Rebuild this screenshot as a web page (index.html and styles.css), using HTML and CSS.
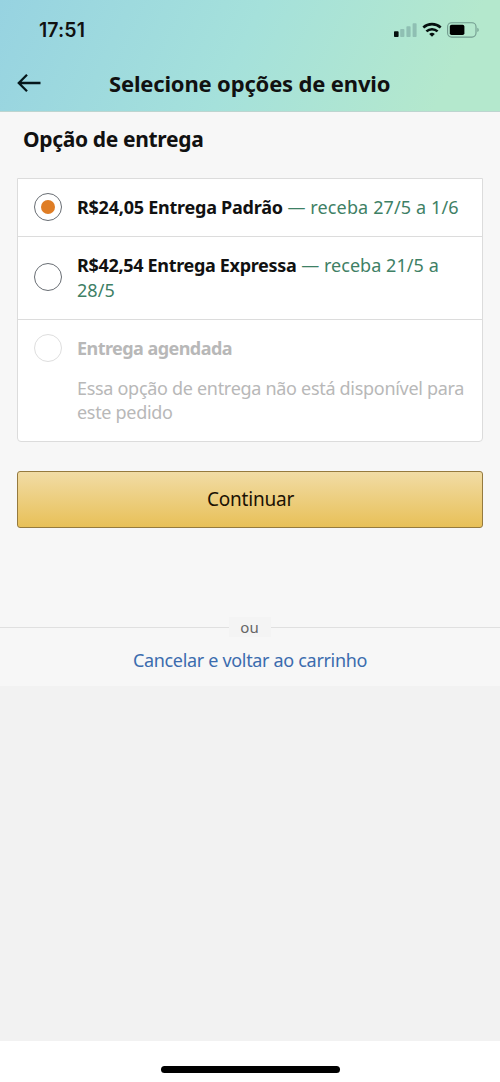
FILE: index.html
```html
<!DOCTYPE html>
<html lang="pt-BR">
<head>
<meta charset="utf-8">
<meta name="viewport" content="width=device-width, initial-scale=1">
<title>Selecione opções de envio</title>
<link rel="stylesheet" href="styles.css">
</head>
<body>
<div class="screen">
  <header class="header">
    <div class="status">
      <span class="time">17:51</span>
      <svg class="status-icons" width="88" height="18" viewBox="0 0 88 18">
        <rect x="2" y="9.3" width="4.6" height="5.7" rx="0.8" fill="#06100f"/>
        <g fill="#8fbfb3">
          <rect x="8.2" y="7.1" width="4.2" height="7.9" rx="0.8"/>
          <rect x="14.4" y="4.2" width="4.2" height="10.8" rx="0.8"/>
          <rect x="20.6" y="1.2" width="4" height="13.8" rx="0.8"/>
        </g>
        <g fill="none" stroke="#06100f" stroke-width="2.6">
          <path d="M31.3 5.4a13.2 13.2 0 0 1 17.4 0"/>
          <path d="M34.4 9.4a8.2 8.2 0 0 1 11.2 0"/>
        </g>
        <path d="M40 14.8l-2.8-2.8a4 4 0 0 1 5.6 0z" fill="#06100f"/>
        <rect x="55.6" y="0.7" width="28.4" height="14.4" rx="4" fill="none" stroke="#729b8f" stroke-width="1.1"/>
        <rect x="57.8" y="2.8" width="14.6" height="10.2" rx="1.8" fill="#000"/>
        <path d="M85.4 5.8c1.7.7 1.7 3.6 0 4.3z" fill="#729b8f"/>
      </svg>
    </div>
    <div class="nav">
      <svg class="back" width="24" height="20" viewBox="0 0 24 20" fill="none" stroke="#06171b" stroke-width="2.3">
        <path d="M23.5 9H2.2M10 .8L1.8 9l8.2 8.2"/>
      </svg>
      <h1 class="title">Selecione opções de envio</h1>
    </div>
  </header>
  <main class="main">
    <h2 class="heading">Opção de entrega</h2>
    <div class="options">
      <label class="option option-standard">
        <span class="radio selected"></span>
        <span class="copy"><b class="name-standard">R$24,05 Entrega Padrão</b> <span class="date date-standard">— receba 27/5 a 1/6</span></span>
      </label>
      <label class="option option-express">
        <span class="radio"></span>
        <span class="copy"><b class="name-express">R$42,54 Entrega Expressa</b> <span class="date">— receba 21/5 a<br>28/5</span></span>
      </label>
      <div class="option option-scheduled">
        <span class="radio"></span>
        <div class="copy">
          <b class="name-scheduled">Entrega agendada</b>
          <p class="note">Essa opção de entrega não está disponível para<br>este pedido</p>
        </div>
      </div>
    </div>
    <button class="continue"><span>Continuar</span></button>
    <div class="divider"><span class="or">ou</span></div>
    <a class="cancel"><span>Cancelar e voltar ao carrinho</span></a>
  </main>
  <div class="filler"></div>
  <footer class="home"><div class="home-bar"></div></footer>
</div>
</body>
</html>
```
FILE: styles.css
```css
* { box-sizing: border-box; }
body { margin: 0; font-family: "Noto Sans", sans-serif; color: #111; }
.screen { width: 500px; height: 1082px; display: flex; flex-direction: column; background: #f2f2f2; overflow: hidden; }
.header { height: 112px; flex: none; background: linear-gradient(115deg, #97d3e1 0%, #a5e1db 48%, #b4e8cd 88%); border-bottom: 1px solid #bdd5d0; }
.status { height: 60px; padding: 0 15px 0 39px; display: flex; align-items: center; justify-content: space-between; }
.time { font: 600 19.5px/24px Inter, sans-serif; letter-spacing: 0.1px; }
.status-icons { margin: 2px 5px 0 0; }
.nav { height: 48px; display: flex; align-items: center; padding-left: 17px; }
.back { flex: none; }
.title { margin: 0 0 2px 68px; font-size: 22px; line-height: 30px; font-weight: 700; letter-spacing: -0.17px; white-space: nowrap; }
.main { height: 574px; flex: none; background: #f7f7f7; }
.heading { margin: 0; padding: 12px 0 0 23px; font-size: 21px; line-height: 30px; height: 66px; letter-spacing: -0.34px; }
.options { margin: 0 17px; height: 264px; background: #fff; border: 1px solid #dcdcdc; border-radius: 0 0 4px 4px; }
.option { display: flex; align-items: center; padding-left: 16px; gap: 15px; font-size: 18px; line-height: 25px; white-space: nowrap; }
.option + .option { border-top: 1px solid #dcdcdc; }
.option-standard { height: 57px; }
.option-express { height: 83px; }
.option-scheduled { height: 122px; align-items: flex-start; padding-top: 14px; color: #b8b8b8; }
.option-standard .radio { margin-bottom: 2px; }
.option-express .radio { margin-bottom: 2px; }
.option-scheduled .copy { padding-top: 2px; }
.radio { width: 28px; height: 28px; flex: none; border: 1px solid #686d73; border-radius: 50%; background: #fff; display: grid; place-items: center; }
.selected::after { content: ""; width: 14px; height: 14px; border-radius: 50%; background: #df7d25; }
.option-scheduled .radio { border-color: #dedede; }
.name-standard { letter-spacing: -0.24px; }
.name-express { letter-spacing: -0.32px; }
.name-scheduled { letter-spacing: -0.55px; }
.date { color: #3e8065; letter-spacing: 0.05px; }
.date-standard { letter-spacing: 0.13px; }
.note { margin: 15px 0 0; line-height: 24px; letter-spacing: -0.3px; }
.continue { display: block; width: 466px; height: 57px; margin: 29px 17px 0; padding: 0 0 2px 1px; border: 1px solid #957a3e; border-radius: 3px; background: linear-gradient(#f1dca5, #e8c058); font: 19px/26px "Noto Sans", sans-serif; letter-spacing: -0.2px; color: #1b1204; }
.divider { height: 20px; margin-top: 89px; display: flex; align-items: center; justify-content: center; font-size: 15px; line-height: 20px; color: #666; }
.divider::before, .divider::after { content: ""; flex: 1; height: 1px; background: #e0e0e0; }
.or { width: 42px; padding-right: 1px; text-align: center; background: #f4f4f4; }
.cancel { display: block; margin-top: 11px; text-align: center; font-size: 18px; line-height: 25px; letter-spacing: -0.32px; color: #3b6cae; }
.filler { flex: 1; background: #f2f2f2; }
.home { height: 41px; flex: none; background: #fff; display: flex; justify-content: center; padding-top: 25px; }
.home-bar { width: 179px; height: 7px; border-radius: 4px; background: #000; }
```
